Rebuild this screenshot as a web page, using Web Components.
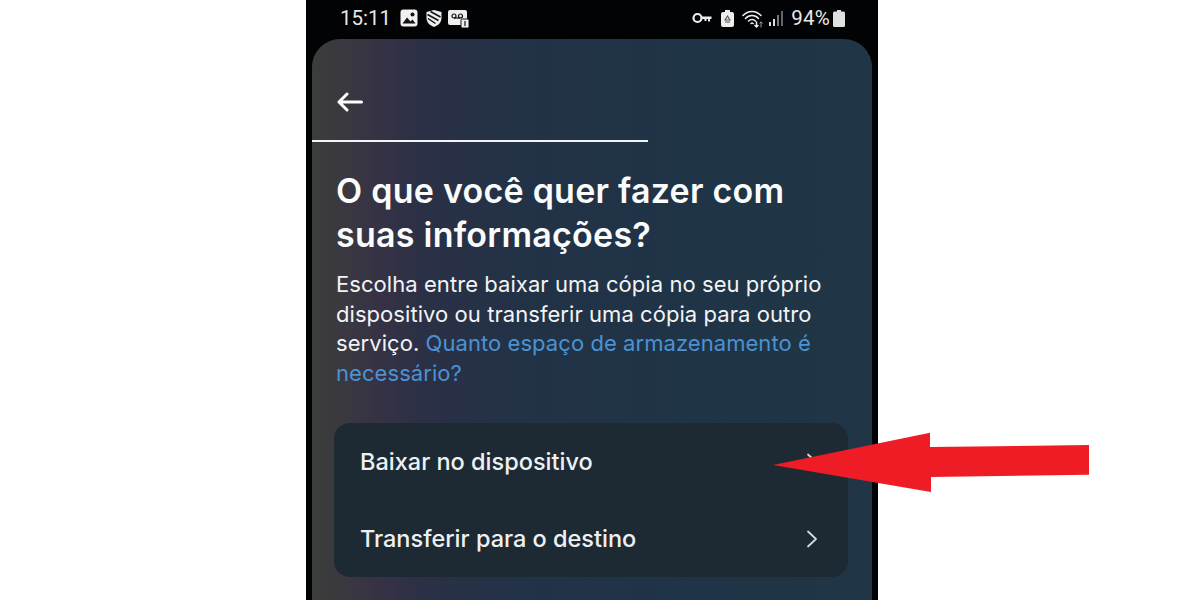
<!DOCTYPE html>
<html lang="pt-BR">
<head>
<meta charset="utf-8">
<title>Suas informações</title>
<style>
html,body{margin:0;height:600px;overflow:hidden;background:#fff}
a{color:#4b92d3;text-decoration:none}
</style>
</head>
<body>
<phone-frame>
  <status-bar slot="status"></status-bar>
  <info-sheet>
    <span slot="title">O que você quer fazer com suas informações?</span>
    Escolha entre baixar uma cópia no seu próprio dispositivo ou transferir uma cópia para outro serviço. <a>Quanto espaço de armazenamento é necessário?</a>
    <option-list slot="options">
      <option-row>Baixar no dispositivo</option-row>
      <option-row>Transferir para o destino</option-row>
    </option-list>
  </info-sheet>
</phone-frame>
<callout-arrow></callout-arrow>
<script>
class PhoneFrame extends HTMLElement{
    constructor(){
        super();
        this.attachShadow({mode:"open"});
        this.shadowRoot.innerHTML=`
        <style>
            :host{display:flex;flex-direction:column;width:572px;height:600px;margin-left:306px;background:#020304;overflow:hidden;box-sizing:border-box;padding:0 6px}
        </style>
        <slot name="status"></slot>
        <slot></slot>`;
    }
}
class StatusBar extends HTMLElement{
    constructor(){
        super();
        this.attachShadow({mode:"open"});
        this.shadowRoot.innerHTML=`
        <style>
            :host{display:flex;align-items:center;height:39px;flex:none;padding:0 27px 3px 28px;box-sizing:border-box;color:#e8e8e8;font:400 20.5px Roboto,"Liberation Sans",sans-serif}
            .left,.right{display:flex;align-items:center}
            .right{margin-left:auto}
            svg{display:block}
        </style>
        <div class="left">
            <span>15:11</span>
            <svg style="margin-left:9px" width="18" height="18" viewBox="0 0 18 18"><rect width="17" height="17" x=".5" y=".5" rx="3" fill="#f0f0f0"/><circle cx="12.5" cy="5.5" r="2" fill="#111"/><path d="M2.500 14.500l4.500-6 3.500 4 2-2 3 4z" fill="#111"/></svg>
            <svg style="margin-left:7px" width="18" height="19" viewBox="0 0 17 19"><path d="M8.500 1l7.500 2v6c0 4.500-3.500 7.500-7.500 9C4.500 16.500 1 13.500 1 9V3z" fill="#eee"/><path d="M2 5.500l11 6M2.500 9.500l7.500 5M5 2.500l10 5.500" stroke="#111" stroke-width="1.500" fill="none"/></svg>
            <svg style="margin-left:5px" width="21" height="19" viewBox="0 0 21 19"><rect y="1" width="19" height="15" rx="2" fill="#eee"/><circle cx="6" cy="7" r="2" fill="none" stroke="#111" stroke-width="1.200"/><circle cx="12.500" cy="7" r="2" fill="none" stroke="#111" stroke-width="1.200"/><path d="M6 9h6.500" stroke="#111" stroke-width="1.200"/><rect x="13" y="10" width="8" height="9" rx="1.500" fill="#eee" stroke="#111"/><path d="M17 12v5" stroke="#111" stroke-width="1.200"/></svg>
        </div>
        <div class="right">
            <svg width="20" height="12" viewBox="0 0 20 12"><circle cx="5.500" cy="6" r="4" fill="none" stroke="#eee" stroke-width="2.200"/><path d="M9 4.500H19.500V7H18v2.500h-2V7h-1.500v2h-2V7H9z" fill="#eee"/></svg>
            <svg style="margin-left:9px" width="13" height="17" viewBox="0 0 13 17"><path d="M4 0h5v2h2a2 2 0 0 1 2 2v11a2 2 0 0 1-2 2H2a2 2 0 0 1-2-2V4a2 2 0 0 1 2-2h2z" fill="#eee"/><path d="M6.500 6l2.500 4H4zM4 12h5" fill="none" stroke="#555" stroke-width="1.100"/></svg>
            <svg style="margin-left:8px" width="22" height="19" viewBox="0 0 22 19" fill="none" stroke="#eee" stroke-width="1.500" stroke-linecap="round"><path d="M1 6.500C6 1 14 1 19 6.500"/><path d="M3.500 9.500c3.500-4 9.500-4 13 0"/><path d="M6.500 12c2-2 5-2 7 0"/><path d="M9 14.500c.7-.6 1.500-.6 2.200 0"/><path d="M14.500 13v5M13 16.500l1.500 1.500 1.500-1.500"/><path d="M19 18v-5M17.800 14.200l1.200-1.200 1.200 1.200" stroke="#999" stroke-width="1"/></svg>
            <svg style="margin-left:4px" width="16" height="17" viewBox="0 0 16 17"><rect x="1" y="12" width="2" height="4" fill="#ddd"/><rect x="5" y="9" width="2" height="7" fill="#ddd"/><rect x="9" y="5" width="2" height="11" fill="#777"/><rect x="13" y="1" width="2" height="15" fill="#666"/></svg>
            <span style="margin-left:7px;font-size:20.500px;letter-spacing:.2px">94%</span>
            <svg style="margin-left:3px" width="12" height="17" viewBox="0 0 12 17"><path d="M4 0h4v1.500H8h2.500a1.500 1.500 0 0 1 1.500 1.500v12.500a1.500 1.500 0 0 1-1.500 1.500h-9A1.500 1.500 0 0 1 0 15.500V3a1.500 1.500 0 0 1 1.500-1.500H4z" fill="#dfe0e0"/></svg>
        </div>`;
    }
}
class InfoSheet extends HTMLElement{
    constructor(){
        super();
        this.attachShadow({mode:"open"});
        this.shadowRoot.innerHTML=`
        <style>
            :host{display:block;flex:1;border-radius:28px 28px 0 0;color:#fafbfb;font-family:Inter,"Liberation Sans",sans-serif;background:
                linear-gradient(to right,#3a3e3b 0,#3a3840 6%,#363245 12%,#2b3046 20%,#233246 35%,#1f3446 70%,#203545 100%);}
            .nav{height:102px;box-sizing:border-box;padding:53px 0 0 25px}
            .nav svg{display:block}
            .progress{height:2px;width:336px;background:#f2f4f5;margin-top:-1px}
            .content{padding:27px 24px 0}
            h1{margin:0;max-width:470px;font-size:34px;line-height:44px;font-weight:600;letter-spacing:.25px}
            p{margin:13px 0 0;font-size:22px;line-height:29.500px;color:#f2f4f5;font-weight:400;letter-spacing:.06px}
            ::slotted(option-list){margin-top:35px}
        </style>
        <div class="nav"><svg width="26" height="20" viewBox="0 0 26 20" fill="none" stroke="#fff" stroke-width="3" stroke-linecap="round" stroke-linejoin="round"><path d="M24.500 10H2M10 2l-8 8 8 8"/></svg></div>
        <div class="progress"></div>
        <div class="content">
            <h1><slot name="title"></slot></h1>
            <p><slot></slot></p>
            <slot name="options"></slot>
        </div>`;
    }
}
class OptionList extends HTMLElement{
    constructor(){
        super();
        this.attachShadow({mode:"open"});
        this.shadowRoot.innerHTML=`
        <style>
            :host{display:block;margin:0 0 0 -2px;width:514px;border-radius:16px;background:#1e2a33;overflow:hidden}
        </style>
        <slot></slot>`;
    }
}
class OptionRow extends HTMLElement{
    constructor(){
        super();
        this.attachShadow({mode:"open"});
        this.shadowRoot.innerHTML=`
        <style>
            :host{display:flex;align-items:center;justify-content:space-between;height:77px;box-sizing:border-box;padding:0 30px 0 26px;font-size:23.500px;font-weight:500;color:#eef1f3}
            svg{display:block}
        </style>
        <span><slot></slot></span>
        <svg width="12" height="18" viewBox="0 0 12 18" fill="none" stroke="#d5d9dc" stroke-width="1.800" stroke-linecap="round" stroke-linejoin="round"><path d="M2 1.500L10 9l-8 7.500"/></svg>`;
    }
}
class CalloutArrow extends HTMLElement{
    constructor(){
        super();
        this.attachShadow({mode:"open"});
        this.shadowRoot.innerHTML=`
        <style>
            :host{position:absolute;left:770px;top:430px;width:322px;height:66px;display:block}
            svg{display:block}
        </style>
        <svg width="322" height="66" viewBox="0 0 322 66"><path d="M3 35L160 2.700V17L319 15V44.700L161 47V62z" fill="#ee1c25"/></svg>`;
    }
}
customElements.define("phone-frame",PhoneFrame);
customElements.define("status-bar",StatusBar);
customElements.define("info-sheet",InfoSheet);
customElements.define("option-list",OptionList);
customElements.define("option-row",OptionRow);
customElements.define("callout-arrow",CalloutArrow);
</script>
</body>
</html>
